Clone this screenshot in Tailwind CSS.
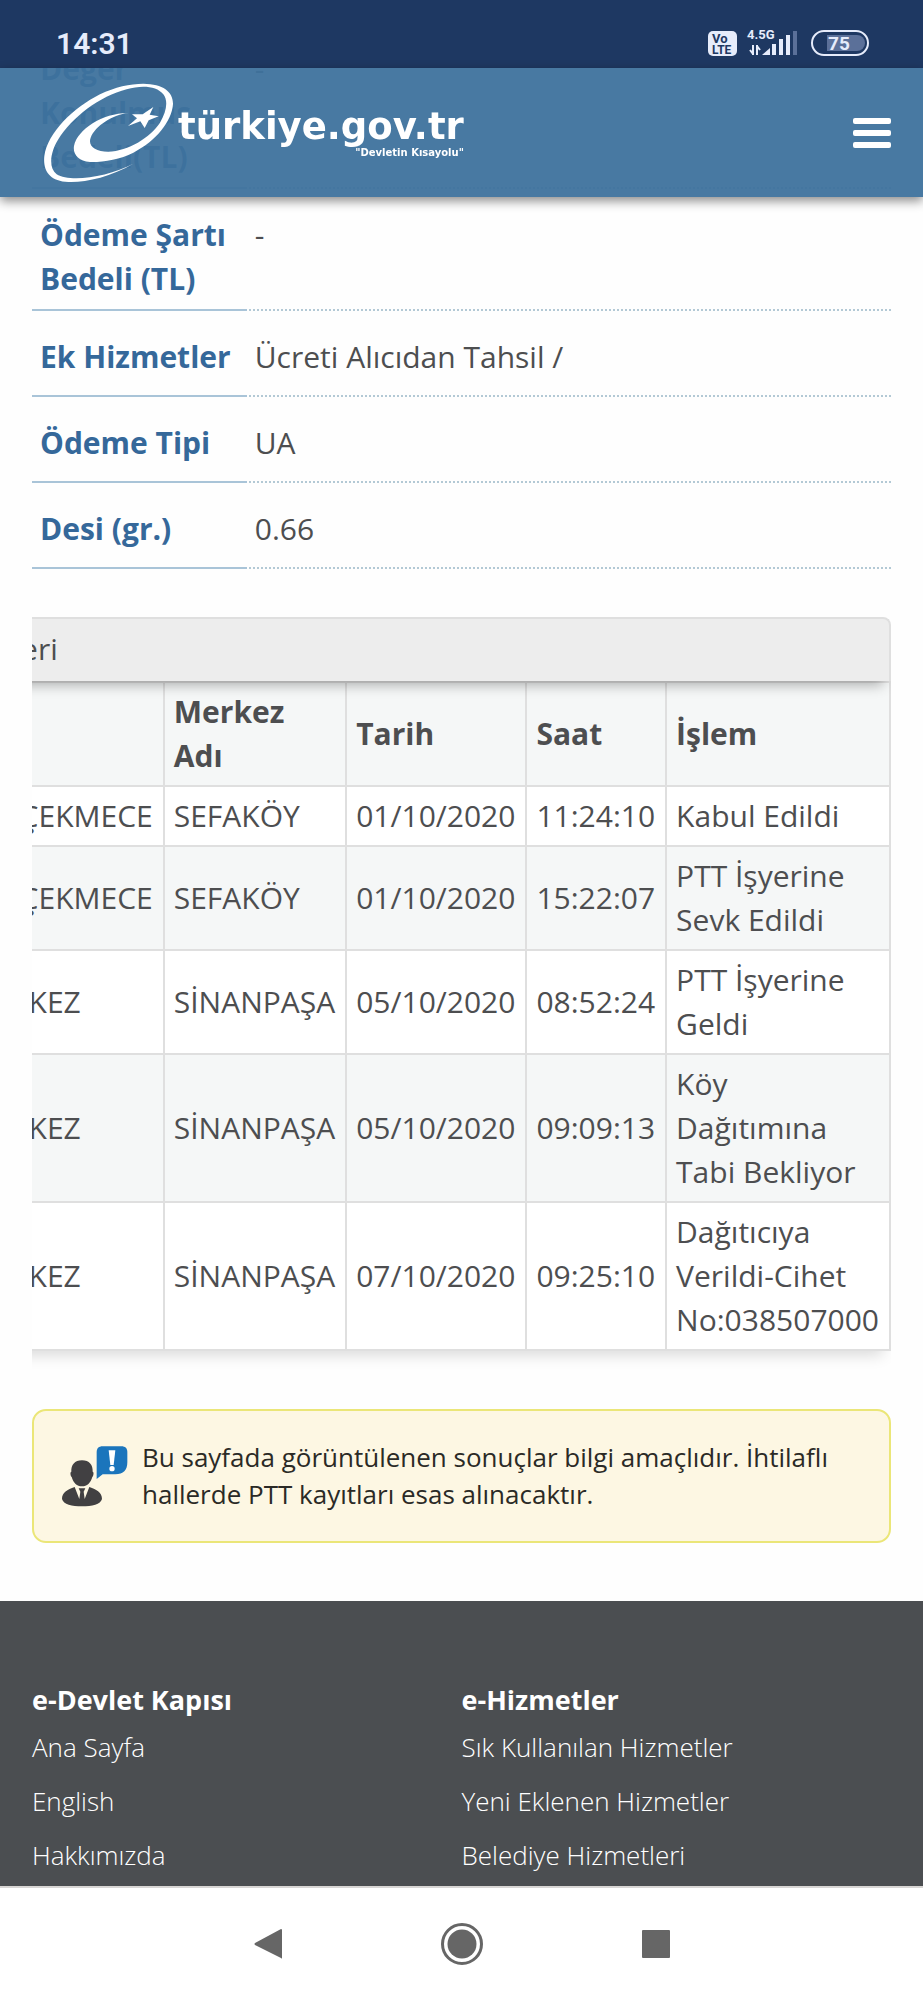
<!DOCTYPE html>
<html lang="tr">
<head>
    <meta charset="UTF-8">
    <meta name="viewport" content="width=device-width, initial-scale=1.0">
    <title>türkiye.gov.tr</title>
    <script src="https://cdn.jsdelivr.net/npm/@tailwindcss/browser@4"></script>
</head>
<body class="bg-[#fefefe] min-h-screen flex flex-col font-['Open_Sans',sans-serif] text-[#4d4e50]">

    <!-- Status bar and site header, on top of the scrolled page -->
    <div class="fixed inset-x-0 top-0 z-10">
        <div class="flex h-17 items-center justify-between bg-[#1e3862] pt-5 pr-13 pl-14 font-['Roboto',sans-serif] text-[#e6ecfb]">
            <span class="text-[30px] leading-8 font-semibold">14:31</span>
            <svg class="h-7 w-[164px]" viewBox="0 0 164 28" font-family="Roboto, sans-serif" font-weight="700">
                <rect x="1" y="1" width="29" height="25" rx="5" fill="#e6ecfb"/>
                <text x="5" y="13" font-size="13" fill="#1e3862">Vo</text>
                <text x="5" y="24" font-size="12" fill="#1e3862">LTE</text>
                <text x="40" y="9" font-size="13" fill="#e6ecfb">4.5G</text>
                <path d="M46 15v10M43 20l3 4M50 25V15M53 20l-3-4" stroke="#e6ecfb" stroke-width="2" fill="none"/>
                <path d="M55 25l8-7v7z" fill="#e6ecfb"/>
                <path d="M65 14h4v11h-4zM72 9h4v16h-4zM79 5h4v20h-4z" fill="#e6ecfb"/>
                <path d="M86 1h4v24h-4z" fill="#5b7099"/>
                <rect x="105" y="1" width="56" height="24" rx="12" fill="none" stroke="#e6ecfb" stroke-width="2"/>
                <path d="M120 5h30a8 8 0 0 1 0 16h-30z" fill="#5b7099"/>
                <text x="121" y="20" font-size="19" fill="#e6ecfb">75</text>
            </svg>
        </div>
        <header class="flex h-[129px] items-center justify-between bg-[#3e729d]/95 pr-8 pl-11 shadow-[0_4px_10px_rgba(0,0,0,0.45)]">
            <a href="#" class="flex items-center gap-1 text-white">
                <svg class="h-[100px] w-[130px] shrink-0" viewBox="132 246 390 300" fill="currentColor">
                    <path d="M402 487C330 530 255 545 205 543C150 541 128 510 133 465C143 395 220 320 300 280C345 258 390 248 430 248C490 249 520 272 519 310C515 360 470 420 400 455C360 475 310 484 270 483C235 481 218 460 222 435C232 385 310 335 385 336C340 340 285 375 272 410C263 435 285 452 325 452C385 450 450 410 480 365C500 330 505 300 490 280C470 255 425 252 380 265C300 285 215 350 175 415C150 455 145 500 170 520C210 545 320 530 402 487Z"/>
                    <path d="M460 318L449 341L476 346L446 358L434 381L421 361L384 375L411 352L396 340L428 340Z"/>
                </svg>
                <span class="flex flex-col items-end font-['DejaVu_Sans',sans-serif]">
                    <span class="text-[37px] leading-10 font-bold">türkiye.gov.tr</span>
                    <span class="text-[10px] leading-3 font-semibold">"Devletin Kısayolu"</span>
                </span>
            </a>
            <button type="button" aria-label="Menü" class="flex w-[38px] flex-col gap-1.5">
                <span class="h-1.5 w-full rounded-xs bg-white"></span>
                <span class="h-1.5 w-full rounded-xs bg-white"></span>
                <span class="h-1.5 w-full rounded-xs bg-white"></span>
            </button>
        </header>
    </div>

    <main class="px-8 pt-[23px]">
        <!-- Shipment details -->
        <dl class="text-[30px] leading-[44px]">
            <div class="flex">
                <dt class="w-1/4 border-b-2 border-[#a9c4d8] pt-6 pb-2 pl-2 font-bold text-[#35689a]">Değer Konulmuş Bedeli(TL)</dt>
                <dd class="ml-0.5 flex-1 border-b-2 border-dotted border-[#b3c9d5] pt-6 pb-2 pl-1.5">-</dd>
            </div>
            <div class="flex">
                <dt class="w-1/4 border-b-2 border-[#a9c4d8] pt-6 pb-2 pl-2 font-bold text-[#35689a]">Ödeme Şartı Bedeli (TL)</dt>
                <dd class="ml-0.5 flex-1 border-b-2 border-dotted border-[#b3c9d5] pt-6 pb-2 pl-1.5">-</dd>
            </div>
            <div class="flex min-h-[86px]">
                <dt class="w-1/4 border-b-2 border-[#a9c4d8] pt-6 pb-2 pl-2 font-bold text-[#35689a]">Ek Hizmetler</dt>
                <dd class="ml-0.5 flex-1 border-b-2 border-dotted border-[#b3c9d5] pt-6 pb-2 pl-1.5">Ücreti Alıcıdan Tahsil /</dd>
            </div>
            <div class="flex min-h-[86px]">
                <dt class="w-1/4 border-b-2 border-[#a9c4d8] pt-6 pb-2 pl-2 font-bold text-[#35689a]">Ödeme Tipi</dt>
                <dd class="ml-0.5 flex-1 border-b-2 border-dotted border-[#b3c9d5] pt-6 pb-2 pl-1.5">UA</dd>
            </div>
            <div class="flex min-h-[86px]">
                <dt class="w-1/4 border-b-2 border-[#a9c4d8] pt-6 pb-2 pl-2 font-bold text-[#35689a]">Desi (gr.)</dt>
                <dd class="ml-0.5 flex-1 border-b-2 border-dotted border-[#b3c9d5] pt-6 pb-2 pl-1.5">0.66</dd>
            </div>
        </dl>

        <!-- Movements table, wider than the screen and scrolled to its right end -->
        <div class="mt-12 flex justify-end overflow-hidden pb-5">
            <div class="shrink-0 text-[30px] leading-[44px] shadow-[0_12px_14px_-8px_rgba(0,0,0,0.15)]">
                <div id="table-title" class="relative rounded-t-lg border-2 border-b-0 border-[#dfdfdf] bg-[#ededed] px-2 pt-2 pb-2.5 shadow-[0_12px_12px_-8px_rgba(0,0,0,0.3)]">Gönderi Hareketleri</div>
                <table aria-labelledby="table-title" class="w-px border-collapse bg-white text-left">
                    <thead>
                        <tr class="bg-[#f5f7f7]">
                            <th class="min-w-[138px] border-2 border-[#dfdfdf] py-[7px] pr-[10px] pl-[9px]">İl</th>
                            <th class="border-2 border-[#dfdfdf] py-[7px] pr-[10px] pl-[9px]">İlçe</th>
                            <th class="border-2 border-[#dfdfdf] py-[7px] pr-[10px] pl-[9px]">Merkez Adı</th>
                            <th class="border-2 border-[#dfdfdf] py-[7px] pr-[10px] pl-[9px]">Tarih</th>
                            <th class="border-2 border-[#dfdfdf] py-[7px] pr-[10px] pl-[9px]">Saat</th>
                            <th class="border-2 border-[#dfdfdf] py-[7px] pr-[10px] pl-[9px]">İşlem</th>
                        </tr>
                    </thead>
                    <tbody>
                        <tr>
                            <td class="border-2 border-[#dfdfdf] py-[7px] pr-[10px] pl-[9px]">1</td>
                            <td class="border-2 border-[#dfdfdf] py-[7px] pr-[10px] pl-[9px]">KÜÇÜKÇEKMECE</td>
                            <td class="border-2 border-[#dfdfdf] py-[7px] pr-[10px] pl-[9px]">SEFAKÖY</td>
                            <td class="border-2 border-[#dfdfdf] py-[7px] pr-[10px] pl-[9px]">01/10/2020</td>
                            <td class="border-2 border-[#dfdfdf] py-[7px] pr-[10px] pl-[9px]">11:24:10</td>
                            <td class="border-2 border-[#dfdfdf] py-[7px] pr-[10px] pl-[9px]">Kabul Edildi</td>
                        </tr>
                        <tr class="bg-[#f5f7f7]">
                            <td class="border-2 border-[#dfdfdf] py-[7px] pr-[10px] pl-[9px]">2</td>
                            <td class="border-2 border-[#dfdfdf] py-[7px] pr-[10px] pl-[9px]">KÜÇÜKÇEKMECE</td>
                            <td class="border-2 border-[#dfdfdf] py-[7px] pr-[10px] pl-[9px]">SEFAKÖY</td>
                            <td class="border-2 border-[#dfdfdf] py-[7px] pr-[10px] pl-[9px]">01/10/2020</td>
                            <td class="border-2 border-[#dfdfdf] py-[7px] pr-[10px] pl-[9px]">15:22:07</td>
                            <td class="border-2 border-[#dfdfdf] py-[7px] pr-[10px] pl-[9px]">PTT İşyerine Sevk Edildi</td>
                        </tr>
                        <tr>
                            <td class="border-2 border-[#dfdfdf] py-[7px] pr-[10px] pl-[9px]">3</td>
                            <td class="border-2 border-[#dfdfdf] py-[7px] pr-[82px] text-right">MERKEZ</td>
                            <td class="border-2 border-[#dfdfdf] py-[7px] pr-[10px] pl-[9px]">SİNANPAŞA</td>
                            <td class="border-2 border-[#dfdfdf] py-[7px] pr-[10px] pl-[9px]">05/10/2020</td>
                            <td class="border-2 border-[#dfdfdf] py-[7px] pr-[10px] pl-[9px]">08:52:24</td>
                            <td class="border-2 border-[#dfdfdf] py-[7px] pr-[10px] pl-[9px]">PTT İşyerine Geldi</td>
                        </tr>
                        <tr class="bg-[#f5f7f7]">
                            <td class="border-2 border-[#dfdfdf] py-[7px] pr-[10px] pl-[9px]">4</td>
                            <td class="border-2 border-[#dfdfdf] py-[7px] pr-[82px] text-right">MERKEZ</td>
                            <td class="border-2 border-[#dfdfdf] py-[7px] pr-[10px] pl-[9px]">SİNANPAŞA</td>
                            <td class="border-2 border-[#dfdfdf] py-[7px] pr-[10px] pl-[9px]">05/10/2020</td>
                            <td class="border-2 border-[#dfdfdf] py-[7px] pr-[10px] pl-[9px]">09:09:13</td>
                            <td class="border-2 border-[#dfdfdf] py-[7px] pr-[10px] pl-[9px]">Köy Dağıtımına Tabi Bekliyor</td>
                        </tr>
                        <tr>
                            <td class="border-2 border-[#dfdfdf] py-[7px] pr-[10px] pl-[9px]">5</td>
                            <td class="border-2 border-[#dfdfdf] py-[7px] pr-[82px] text-right">MERKEZ</td>
                            <td class="border-2 border-[#dfdfdf] py-[7px] pr-[10px] pl-[9px]">SİNANPAŞA</td>
                            <td class="border-2 border-[#dfdfdf] py-[7px] pr-[10px] pl-[9px]">07/10/2020</td>
                            <td class="border-2 border-[#dfdfdf] py-[7px] pr-[10px] pl-[9px]">09:25:10</td>
                            <td class="border-2 border-[#dfdfdf] py-[7px] pr-[10px] pl-[9px]">Dağıtıcıya Verildi-Cihet No:038507000</td>
                        </tr>
                    </tbody>
                </table>
            </div>
        </div>

        <div class="mt-[38px] flex items-center gap-3.5 rounded-[14px] border-2 border-[#ebe678] bg-[#fdf7e3] px-7 py-7 text-[26px] leading-[37px] text-[#2b2a26]">
            <svg class="h-[62px] w-[66px] shrink-0" viewBox="0 0 198 186">
                <path fill="#414042" d="M60 46c22 0 33 14 32 34 4 0 3 12-1 16-5 18-16 28-31 28s-26-10-31-28c-4-4-5-16-1-16-1-20 10-34 32-34z"/>
                <path fill="#414042" d="M38 126l14 36 3-22-5-10h20l-5 10 3 22 14-36c22 8 38 16 38 36-4 16-30 22-60 22S4 178 0 162c0-20 16-28 38-36z"/>
                <path fill="#1b75bc" d="M104 102V22c0-12 6-18 18-18h56c12 0 18 6 18 18v30c0 24-12 36-36 36h-38z"/>
                <path fill="#fff" d="M140 16h20l-5 44h-10z"/>
                <circle fill="#fff" cx="150" cy="71" r="8"/>
            </svg>
            <p>Bu sayfada görüntülenen sonuçlar bilgi amaçlıdır. İhtilaflı hallerde PTT kayıtları esas alınacaktır.</p>
        </div>
    </main>

    <footer class="mt-[58px] grid grid-cols-2 bg-[#4b4e51] px-8 pt-[79px] pb-1 text-white">
        <section>
            <h2 class="text-[27px] leading-[40px] font-bold">e-Devlet Kapısı</h2>
            <ul class="text-[26px] leading-[54px] font-light">
                <li><a href="#">Ana Sayfa</a></li>
                <li><a href="#">English</a></li>
                <li><a href="#">Hakkımızda</a></li>
            </ul>
        </section>
        <section>
            <h2 class="text-[27px] leading-[40px] font-bold">e-Hizmetler</h2>
            <ul class="text-[26px] leading-[54px] font-light">
                <li><a href="#">Sık Kullanılan Hizmetler</a></li>
                <li><a href="#">Yeni Eklenen Hizmetler</a></li>
                <li><a href="#">Belediye Hizmetleri</a></li>
            </ul>
        </section>
    </footer>

    <!-- Android navigation -->
    <nav class="flex grow items-center justify-center gap-[159px] border-t-2 border-[#d8d6d4] bg-white py-8 text-[#666]">
        <button type="button" aria-label="Geri">
            <svg class="h-8 w-7" viewBox="0 0 28 32" fill="currentColor"><path d="M28 2v28q0 1-1 0L1 17q-1-1 0-2L27 1q1 0 1 1z"/></svg>
        </button>
        <button type="button" aria-label="Ana ekran">
            <svg class="size-[42px]" viewBox="0 0 42 42" fill="currentColor"><circle cx="21" cy="21" r="14.5"/><circle cx="21" cy="21" r="19.5" fill="none" stroke="currentColor" stroke-width="3"/></svg>
        </button>
        <button type="button" aria-label="Son uygulamalar">
            <svg class="size-7" viewBox="0 0 28 28" fill="currentColor"><rect width="28" height="28" rx="1"/></svg>
        </button>
    </nav>

</body>
</html>
